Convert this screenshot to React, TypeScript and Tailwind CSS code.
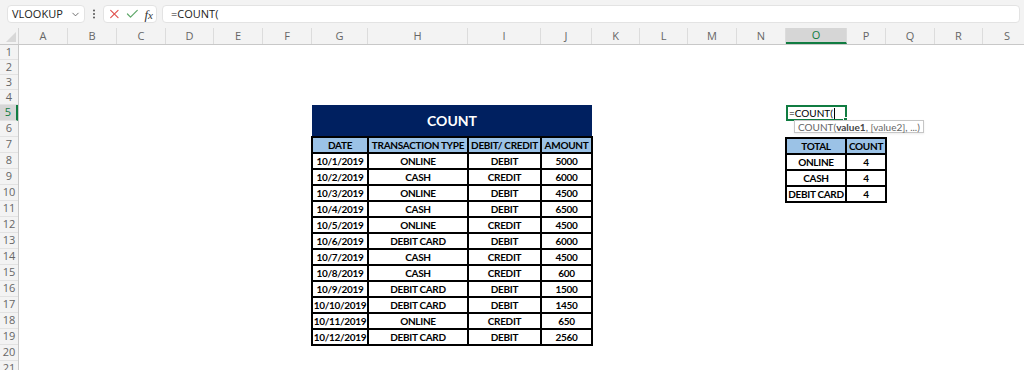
import React from 'react';
import { ChevronDown, X, Check } from 'lucide-react';

const columns = [
  { name: 'A', w: 'w-[49px]' },
  { name: 'B', w: 'w-[49px]' },
  { name: 'C', w: 'w-[49px]' },
  { name: 'D', w: 'w-[48px]' },
  { name: 'E', w: 'w-[49px]' },
  { name: 'F', w: 'w-[49px]' },
  { name: 'G', w: 'w-[56px]' },
  { name: 'H', w: 'w-[100px]' },
  { name: 'I', w: 'w-[73px]' },
  { name: 'J', w: 'w-[51px]' },
  { name: 'K', w: 'w-[48px]' },
  { name: 'L', w: 'w-[48px]' },
  { name: 'M', w: 'w-[49px]' },
  { name: 'N', w: 'w-[49px]' },
  { name: 'O', w: 'w-[61px]' },
  { name: 'P', w: 'w-[39px]' },
  { name: 'Q', w: 'w-[49px]' },
  { name: 'R', w: 'w-[48px]' },
  { name: 'S', w: 'w-[49px]' },
];

const rows = Array.from({ length: 21 }, (_, i) => i + 1);

const transactions = [
  ['10/1/2019', 'ONLINE', 'DEBIT', '5000'],
  ['10/2/2019', 'CASH', 'CREDIT', '6000'],
  ['10/3/2019', 'ONLINE', 'DEBIT', '4500'],
  ['10/4/2019', 'CASH', 'DEBIT', '6500'],
  ['10/5/2019', 'ONLINE', 'CREDIT', '4500'],
  ['10/6/2019', 'DEBIT CARD', 'DEBIT', '6000'],
  ['10/7/2019', 'CASH', 'CREDIT', '4500'],
  ['10/8/2019', 'CASH', 'CREDIT', '600'],
  ['10/9/2019', 'DEBIT CARD', 'DEBIT', '1500'],
  ['10/10/2019', 'DEBIT CARD', 'DEBIT', '1450'],
  ['10/11/2019', 'ONLINE', 'CREDIT', '650'],
  ['10/12/2019', 'DEBIT CARD', 'DEBIT', '2560'],
];

const totals = [
  ['ONLINE', '4'],
  ['CASH', '4'],
  ['DEBIT CARD', '4'],
];

const cell = 'border-2 border-black text-center align-middle p-0 leading-none whitespace-nowrap overflow-hidden';

const FormulaBar = () => (
  <div className="h-[28px] bg-[#f3f3f3] flex items-center pl-[7px] pr-[4px] gap-[3px] font-['Open_Sans',sans-serif] text-[11px] text-[#222]">
    {/* Name box */}
    <div className="w-[78px] h-[18px] bg-white border border-[#e3e3e3] rounded-[4px] flex items-center justify-between pl-[4px] pr-[3px]">
      <span>VLOOKUP</span>
      <ChevronDown className="w-[11px] h-[11px] text-[#555]" strokeWidth={1.8} />
    </div>
    <svg width="10" height="12" viewBox="0 0 10 12" className="mx-[1px]">
      <circle cx="5" cy="2.5" r="1" fill="#555" />
      <circle cx="5" cy="6" r="1" fill="#555" />
      <circle cx="5" cy="9.5" r="1" fill="#555" />
    </svg>
    {/* Cancel / enter / fx */}
    <div className="w-[54px] h-[18px] bg-white border border-[#e3e3e3] rounded-[4px] flex items-center gap-[3px] px-[3px]">
      <X className="w-[16px] h-[16px] text-[#e0524f]" strokeWidth={1.9} />
      <Check className="w-[16px] h-[16px] text-[#5fa869]" strokeWidth={2} />
      <span className="font-['Liberation_Serif',serif] italic text-[13px] text-[#333] ml-[2px] leading-none">
        f<span className="text-[11px]">x</span>
      </span>
    </div>
    {/* Formula input */}
    <div className="flex-1 h-[18px] ml-[2px] bg-white border border-[#e3e3e3] rounded-[4px] flex items-center pl-[8px]">
      =COUNT(
    </div>
  </div>
);

const ColumnHeader = () => (
  <div className="flex h-[17px] bg-[#f3f3f3] border-b border-[#c8c8c8] font-['Open_Sans',sans-serif] text-[11px] text-[#666]">
    <div className="w-[19px] shrink-0 border-r border-[#d4d4d4] relative">
      <svg width="10" height="10" viewBox="0 0 10 10" className="absolute right-[2px] bottom-[2px]">
        <polygon points="10,0 10,10 0,10" fill="#d8d8d8" />
      </svg>
    </div>
    {columns.map((c) => (
      <div
        key={c.name}
        className={`${c.w} shrink-0 flex items-center justify-center border-r border-[#dcdcdc] ${
          c.name === 'O' ? 'bg-[#d6d6d6] border-b-2 border-b-[#107c41] text-[#107c41]' : ''
        }`}
      >
        {c.name}
      </div>
    ))}
  </div>
);

const RowHeaders = () => (
  <div className="w-[19px] shrink-0 flex flex-col bg-[#f3f3f3] border-r border-[#c8c8c8] font-['Open_Sans',sans-serif] text-[11px] text-[#666]">
    {rows.map((r) => (
      <div
        key={r}
        className={`${r <= 4 ? 'h-[15px]' : 'h-[16px]'} shrink-0 flex items-center justify-center border-b border-[#e2e2e2] ${
          r === 5 ? 'bg-[#d6d6d6] border-r-2 border-r-[#107c41] text-[#107c41]' : ''
        }`}
      >
        {r}
      </div>
    ))}
  </div>
);

const CountTable = () => (
  <table className="col-start-7 col-span-4 row-start-5 row-span-15 w-full h-full table-fixed border-collapse font-['Lato',sans-serif] font-bold text-[10px] tracking-[-0.3px] text-black -ml-px">
    <colgroup>
      <col className="w-[56px]" />
      <col className="w-[100px]" />
      <col className="w-[73px]" />
      <col className="w-[51px]" />
    </colgroup>
    <tbody>
      <tr className="h-[32px]">
        <td colSpan={4} className="bg-[#002060] text-white text-[14px] tracking-normal text-center align-middle border-0 p-0">
          COUNT
        </td>
      </tr>
      <tr className="h-[16px] bg-[#9bc2e6]">
        <td className={cell}>DATE</td>
        <td className={cell}>TRANSACTION TYPE</td>
        <td className={cell}>DEBIT/ CREDIT</td>
        <td className={cell}>AMOUNT</td>
      </tr>
      {transactions.map((t) => (
        <tr key={t[0]} className="h-[16px] bg-white">
          {t.map((v, i) => (
            <td key={i} className={cell}>
              {v}
            </td>
          ))}
        </tr>
      ))}
    </tbody>
  </table>
);

const TotalTable = () => (
  <table className="col-start-15 col-span-2 row-start-7 row-span-4 w-full h-full table-fixed border-collapse font-['Lato',sans-serif] font-bold text-[10px] tracking-[-0.3px] text-black -ml-px">
    <colgroup>
      <col className="w-[60px]" />
      <col className="w-[40px]" />
    </colgroup>
    <tbody>
      <tr className="h-[16px] bg-[#9bc2e6]">
        <td className={cell}>TOTAL</td>
        <td className={cell}>COUNT</td>
      </tr>
      {totals.map((t) => (
        <tr key={t[0]} className="h-[16px] bg-white">
          <td className={cell}>{t[0]}</td>
          <td className={cell}>{t[1]}</td>
        </tr>
      ))}
    </tbody>
  </table>
);

const ActiveCell = () => (
  <div className="col-start-15 row-start-5 relative z-10 border-2 border-[#107c41] bg-white flex items-center pl-[1px] font-['Lato',sans-serif] text-[10px] text-black leading-none">
    <span>=COUNT(</span>
    <span className="w-px h-[11px] bg-black ml-[1px]" />
    <div className="absolute -right-[3px] -bottom-[3px] w-[5px] h-[5px] bg-[#107c41] border border-white" />
    {/* Function tooltip */}
    <div className="absolute left-[6px] top-full mt-[1px] h-[13px] px-[3px] flex items-center bg-white border border-[#c6c6c6] whitespace-nowrap text-[10px] text-[#666] shadow-[0_1px_2px_rgba(0,0,0,0.08)]">
      COUNT(<b className="text-[#444]">value1</b>, [value2], ...)
    </div>
  </div>
);

export default function App() {
  return (
    <div className="w-[1024px] h-[370px] overflow-hidden bg-white flex flex-col">
      <FormulaBar />
      <ColumnHeader />
      <div className="flex flex-1 overflow-hidden">
        <RowHeaders />
        <div className="grid grid-cols-[49px_49px_49px_48px_49px_49px_56px_100px_73px_51px_48px_48px_49px_49px_61px_39px_49px_48px_49px] grid-rows-[15px_15px_15px_15px_repeat(17,16px)] content-start">
          <CountTable />
          <ActiveCell />
          <TotalTable />
        </div>
      </div>
    </div>
  );
}
